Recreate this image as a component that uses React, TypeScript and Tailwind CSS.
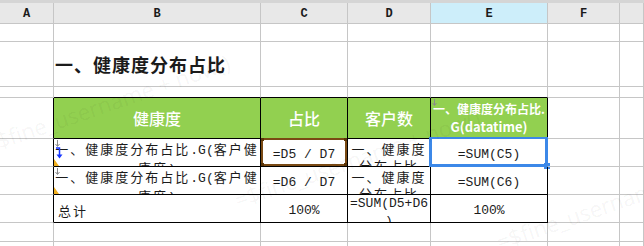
import React from "react";

const grid = "grid grid-cols-[54px_207px_87px_83px_117px_72px_1fr]";
const cjk = "font-['Noto_Sans_CJK_SC',sans-serif]";
const mono = "font-['Liberation_Mono','Noto_Sans_CJK_SC',monospace]";

// r / b : border colour of the right and bottom edge, g = grid grey, k = black
const Cell = ({
  r = "g",
  b = "g",
  className = "",
  children,
}: {
  r?: "g" | "k";
  b?: "g" | "k";
  className?: string;
  children?: React.ReactNode;
}) => (
  <div
    className={`relative overflow-hidden border-r border-b ${
      r === "k" ? "border-r-black" : "border-r-[#c6c6c6]"
    } ${b === "k" ? "border-b-black" : "border-b-[#c6c6c6]"} ${className}`}
  >
    {children}
  </div>
);

const Row = ({ h, children }: { h: string; children: React.ReactNode }) => (
  <div className={`${grid} ${h}`}>{children}</div>
);

const EmptyRow = ({ h }: { h: string }) => (
  <Row h={h}>
    {Array.from({ length: 7 }).map((_, i) => (
      <Cell key={i} />
    ))}
  </Row>
);

const GrayArrow = ({ className }: { className: string }) => (
  <svg className={`absolute ${className}`} width="5" height="7" viewBox="0 0 5 7">
    <path d="M2.5 0 V6 M0.5 4 L2.5 6.5 L4.5 4" stroke="#8a8a8a" strokeWidth="1" fill="none" />
  </svg>
);

const OrangeMark = () => (
  <svg className="absolute left-0 bottom-0" width="5" height="7" viewBox="0 0 5 7">
    <path d="M0 0 L5 7 L0 7 Z" fill="#f2b01e" />
  </svg>
);

const LongName = () => (
  <>
    <span className="tracking-[2px]">一、健康度分布占比</span>
    <span className={mono}>.G(</span>
    <span className="tracking-[2px]">客户健康度</span>
    <span className={mono}>)</span>
  </>
);

const Watermark = ({ className }: { className: string }) => (
  <span
    className={`absolute origin-left -rotate-[19deg] whitespace-nowrap font-['Open_Sans',sans-serif] text-[22px] leading-[30px] text-black/[0.05] ${className}`}
  >
    =$fine_username + now()
  </span>
);

export default function App() {
  const heads = ["A", "B", "C", "D", "E", "F", ""];
  return (
    <div className={`relative h-[246px] w-[644px] overflow-hidden bg-white text-[#1b1b1b] ${cjk}`}>
      <div className="h-[3px] bg-[#d5d5d5]" />
      <div className={`${grid} h-[20px]`}>
        {heads.map((l) => (
          <div
            key={l || "g"}
            className={`flex items-center justify-center border-r border-b border-[#c6c6c6] pt-[2px] font-['Liberation_Mono',monospace] text-[12px] font-semibold ${
              l === "E" ? "bg-[#cdeefa]" : "bg-[#e8e8e8]"
            }`}
          >
            {l}
          </div>
        ))}
      </div>

      <EmptyRow h="h-[19px]" />

      <Row h="h-[45px]">
        <Cell />
        <Cell className="flex items-center pl-[1px] text-[18px] font-bold tracking-[1px] whitespace-nowrap overflow-visible">
          一、健康度分布占比
        </Cell>
        <Cell />
        <Cell />
        <Cell />
        <Cell />
        <Cell />
      </Row>

      <Row h="h-[11px]">
        <Cell />
        <Cell b="k" />
        <Cell b="k" />
        <Cell b="k" />
        <Cell b="k" />
        <Cell />
        <Cell />
      </Row>

      <Row h="h-[41px]">
        <Cell r="k" />
        <Cell r="k" b="k" className="flex items-center justify-center bg-[#92d050] text-[16px] font-medium text-white">
          健康度
        </Cell>
        <Cell r="k" b="k" className="flex items-center justify-center bg-[#92d050] text-[16px] font-medium text-white">
          占比
        </Cell>
        <Cell r="k" b="k" className="flex items-center justify-center bg-[#92d050] text-[16px] font-medium text-white">
          客户数
        </Cell>
        <Cell r="k" b="k" className="flex flex-col items-center justify-center bg-[#92d050] font-bold leading-[18px] text-white whitespace-nowrap">
          <GrayArrow className="left-[1px] top-[1px]" />
          <span className="text-[12px]">一、健康度分布占比.</span>
          <span className="text-[13px]">G(datatime)</span>
        </Cell>
        <Cell />
        <Cell />
      </Row>

      {[5, 6].map((n) => (
        <Row key={n} h="h-[28px]">
          <Cell r="k" />
          <Cell r="k" b="k" className="px-[1px] pt-[1px] text-center text-[13px] leading-[17px]">
            <LongName />
            <GrayArrow className="left-[1px] top-[1px]" />
            {n === 5 && (
              <svg className="absolute left-[1px] top-[8px]" width="8" height="12" viewBox="0 0 8 12">
                <path d="M1 1 H4.5 V8" stroke="#1535ff" strokeWidth="1.5" fill="none" />
                <path d="M1.5 7.5 H7.5 L4.5 11.5 Z" fill="#1535ff" />
              </svg>
            )}
            <OrangeMark />
          </Cell>
          <Cell r="k" b="k" className={`flex items-center justify-center pt-[4px] text-[13px] ${mono} overflow-visible`}>
            ={`D${n}`} / D7
            {n === 5 && (
              <div className="absolute left-0 top-[-1px] h-[28px] w-[86px] border-2 border-[#7a4a14]">
                <div className="absolute -left-[2px] -top-[2px] h-[3px] w-[3px] bg-[#5a3408]" />
                <div className="absolute -right-[2px] -top-[2px] h-[3px] w-[3px] bg-[#5a3408]" />
                <div className="absolute -left-[2px] -bottom-[2px] h-[3px] w-[3px] bg-[#5a3408]" />
                <div className="absolute -right-[2px] -bottom-[2px] h-[3px] w-[3px] bg-[#5a3408]" />
              </div>
            )}
          </Cell>
          <Cell r="k" b="k" className="px-[2px] pt-[1px] text-center text-[13px] leading-[17px] tracking-[2px]">
            一、健康度分布占比
          </Cell>
          <Cell r="k" b="k" className={`flex items-center justify-center pt-[4px] text-[13px] ${mono} overflow-visible`}>
            =SUM(C{n})
            {n === 5 && (
              <>
                <div className="absolute left-[-2px] top-[-2px] h-[30px] w-[119px] border-[3px] border-t-2 border-[#3c88e8]" />
                <div className="absolute left-[113px] top-[24px] h-[6px] w-[6px] bg-[#3c88e8]" />
              </>
            )}
          </Cell>
          <Cell />
          <Cell />
        </Row>
      ))}

      <Row h="h-[28px]">
        <Cell r="k" />
        <Cell r="k" b="k" className="flex items-center pl-[4px] pt-[4px] text-[13px] tracking-[2px]">
          总计
        </Cell>
        <Cell r="k" b="k" className={`flex items-center justify-center pt-[4px] text-[13px] ${mono}`}>
          100%
        </Cell>
        <Cell r="k" b="k" className={`text-center text-[13px] leading-[18px] break-all [line-break:anywhere] ${mono}`}>
          =SUM(D5+D6)
        </Cell>
        <Cell r="k" b="k" className={`flex items-center justify-center pt-[4px] text-[13px] ${mono}`}>
          100%
        </Cell>
        <Cell />
        <Cell />
      </Row>

      <EmptyRow h="h-[19px]" />
      <EmptyRow h="h-[19px]" />

      <div className="pointer-events-none absolute inset-0">
        <Watermark className="left-[-15px] top-[130px]" />
        <Watermark className="left-[235px] top-[185px]" />
        <Watermark className="left-[497px] top-[227px]" />
      </div>
    </div>
  );
}
